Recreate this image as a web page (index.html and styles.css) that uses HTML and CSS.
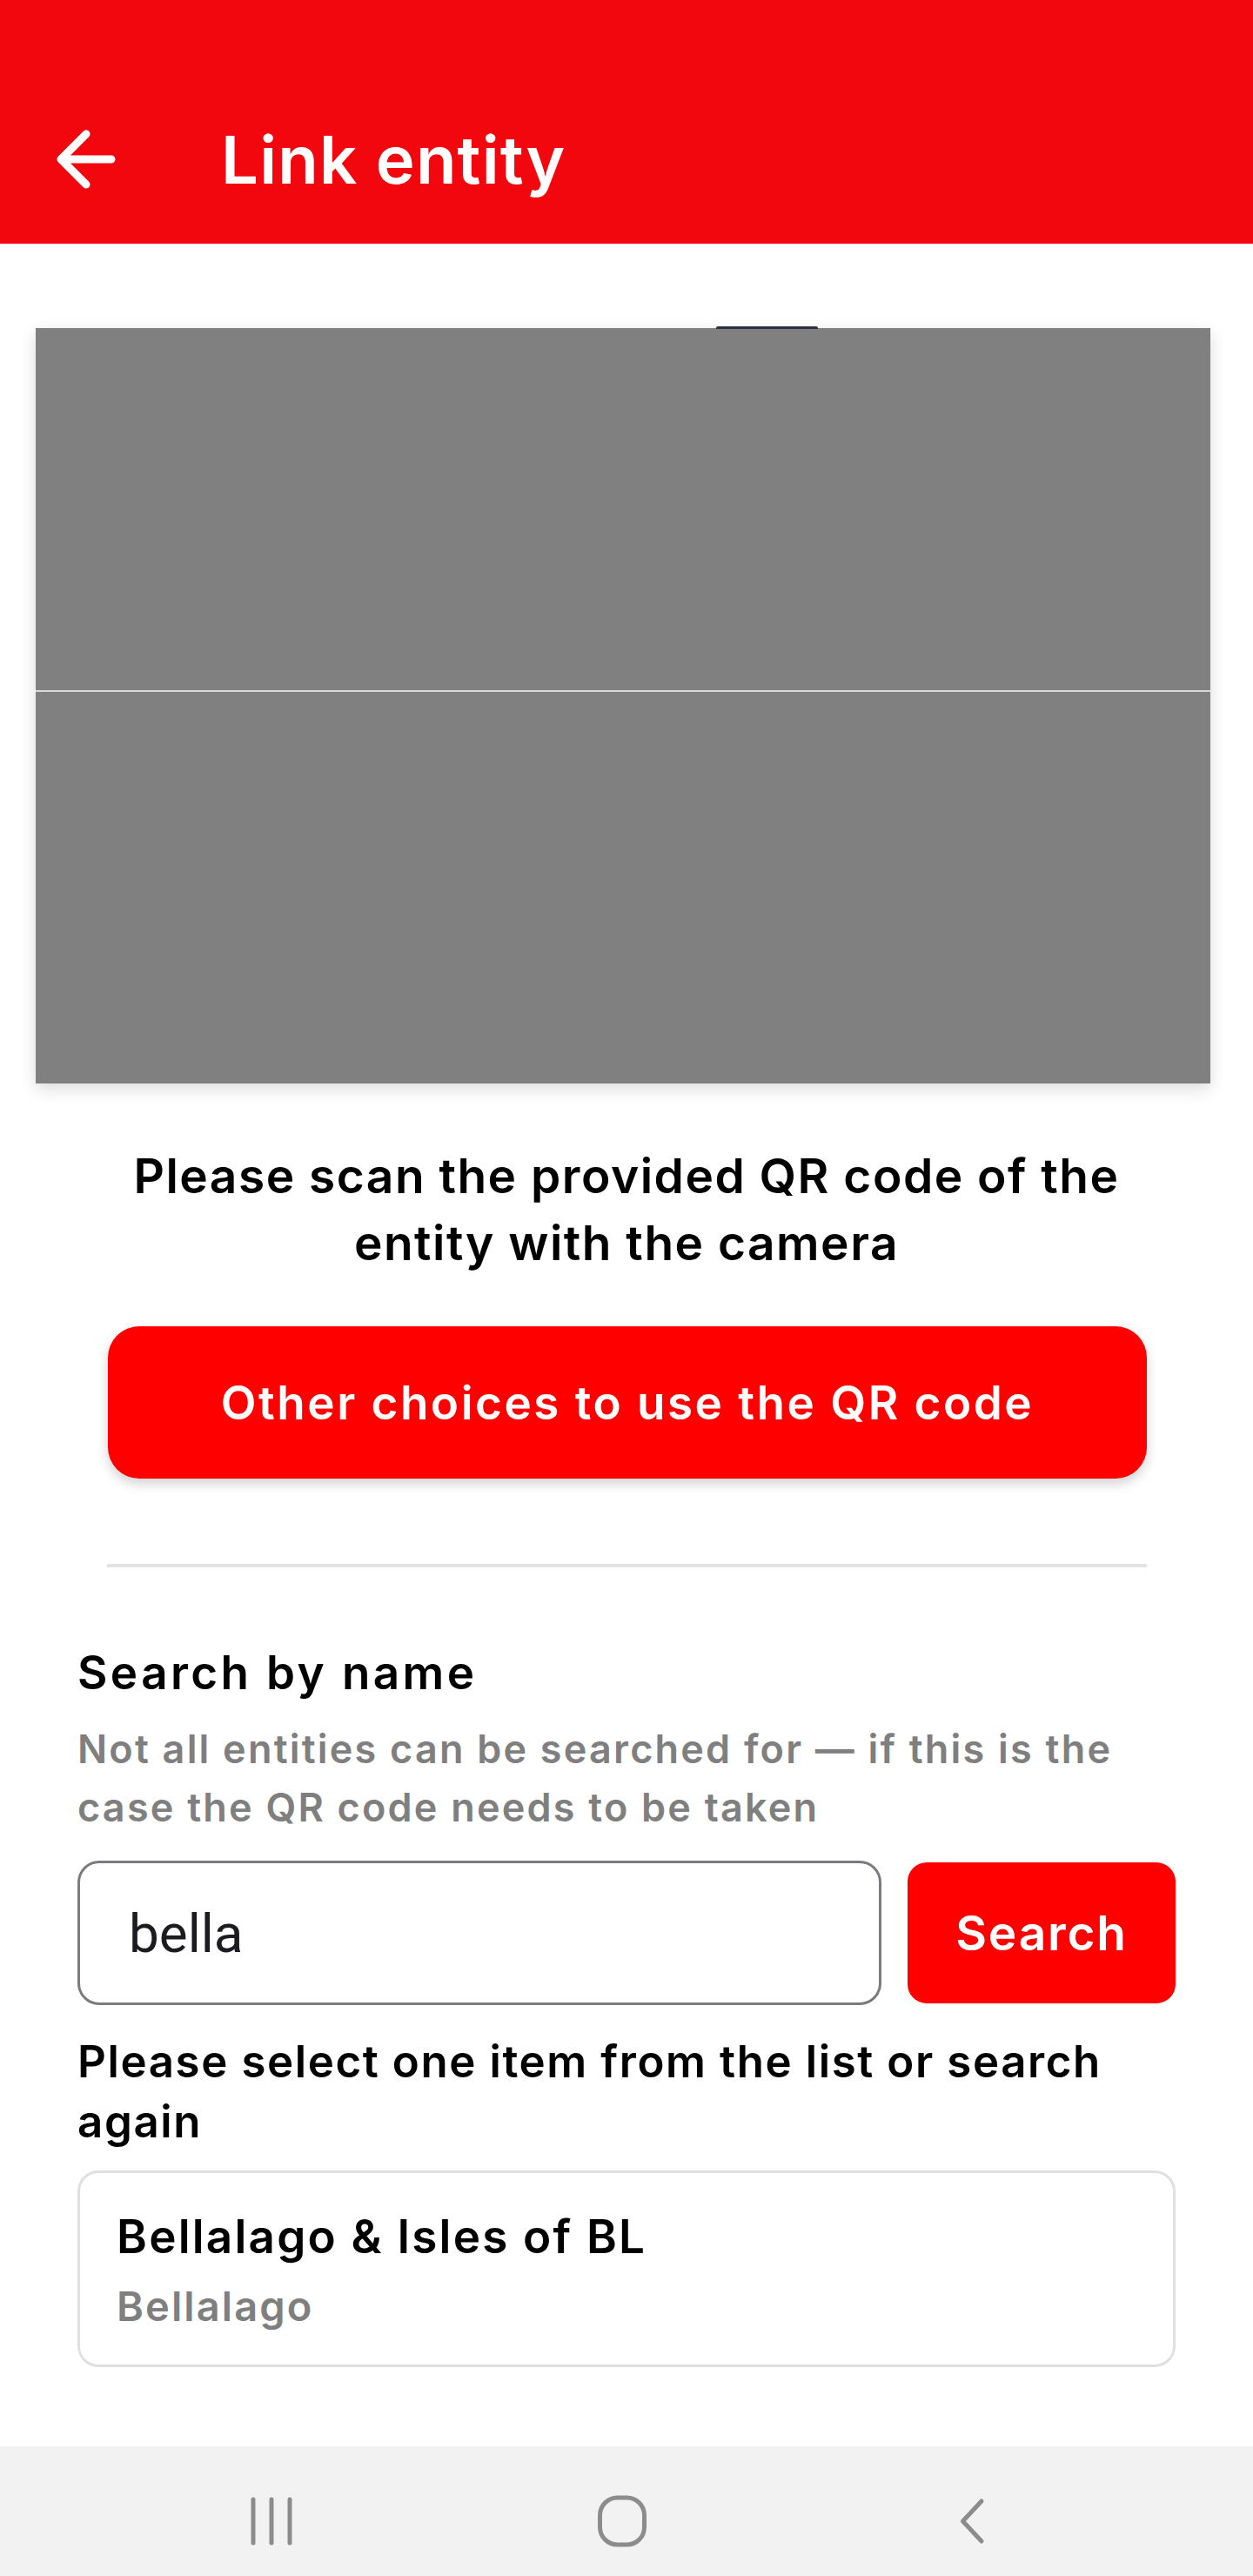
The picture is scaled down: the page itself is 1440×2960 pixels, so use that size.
FILE: index.html
```html
<!doctype html>
<html lang="en">
<head>
    <meta charset="UTF-8">
    <title>Link entity</title>
    <link rel="stylesheet" href="styles.css">
</head>
<body>
    <header class="app-bar">
        <button class="back-btn" aria-label="Back">
            <svg width="80" height="80" viewBox="0 0 80 80">
                <path d="M70 40H12M41 11L12 40L41 69" fill="none" stroke="#fff" stroke-width="9" stroke-linecap="round" stroke-linejoin="round"/>
            </svg>
        </button>
        <h1>Link entity</h1>
    </header>

    <main class="content">
        <div class="scanner">
            <div class="scanner-notch"></div>
            <div class="scan-line"></div>
        </div>

        <p class="scan-hint">Please scan the provided QR code of the entity with the camera</p>

        <button class="btn-wide">Other choices to use the QR code</button>

        <hr class="divider">

        <section class="search">
            <h2>Search by name</h2>
            <p class="hint">Not all entities can be searched for — if this is the case the QR code needs to be taken</p>

            <div class="search-row">
                <input type="text" class="search-input" value="bella">
                <button class="btn-search">Search</button>
            </div>

            <p class="select-label">Please select one item from the list or search again</p>

            <div class="result-card">
                <div class="result-title">Bellalago &amp; Isles of BL</div>
                <div class="result-sub">Bellalago</div>
            </div>
        </section>
    </main>

    <nav class="system-nav">
        <div class="nav-item">
            <svg width="60" height="60" viewBox="0 0 60 60">
                <path d="M9 5V55M30 5V55M51 5V55" stroke="#8c8c8c" stroke-width="5" stroke-linecap="round"/>
            </svg>
        </div>
        <div class="nav-item">
            <svg width="60" height="60" viewBox="0 0 60 60">
                <rect x="4.5" y="3" width="51" height="54" rx="20" fill="none" stroke="#8c8c8c" stroke-width="5"/>
            </svg>
        </div>
        <div class="nav-item">
            <svg width="60" height="60" viewBox="0 0 60 60">
                <path d="M40 7L18.5 30L40 53" fill="none" stroke="#8c8c8c" stroke-width="5" stroke-linecap="round" stroke-linejoin="round"/>
            </svg>
        </div>
    </nav>
</body>
</html>
```

FILE: styles.css
```css
body {
    margin: 0;
    padding: 0;
    height: 2960px;
    display: flex;
    flex-direction: column;
    background: #fff;
    font-family: Inter, "Noto Sans", sans-serif;
    color: #000;
}
.app-bar {
    background-color: #f2070f;
    height: 194px;
    padding: 86px 0 0 58px;
    display: flex;
    align-items: center;
}
.back-btn {
    background: none;
    border: none;
    padding: 0;
    width: 80px;
    height: 80px;
    display: flex;
}
.app-bar h1 {
    margin: 0 0 0 116px;
    color: #fff;
    font-size: 76px;
    font-weight: 600;
    letter-spacing: 1.2px;
}
.content {
    flex: 1;
    display: flex;
    flex-direction: column;
}
.scanner {
    position: relative;
    margin: 97px 49px 0 41px;
    height: 868px;
    background-color: #808080;
    box-shadow: 0 6px 18px rgba(0, 0, 0, 0.14);
}
.scanner-notch {
    position: absolute;
    top: -2px;
    left: 782px;
    width: 117px;
    height: 3px;
    background-color: #2b3140;
    border-radius: 2px 2px 0 0;
}
.scan-line {
    position: absolute;
    top: 416px;
    left: 0;
    right: 0;
    height: 2px;
    background-color: #d9d9d9;
}
.scan-hint {
    margin: 68px 140px 0;
    text-align: center;
    font-size: 55px;
    font-weight: 600;
    letter-spacing: 1.5px;
    line-height: 77px;
}
.btn-wide {
    margin: 57px 122px 0 124px;
    height: 175px;
    border: none;
    border-radius: 36px;
    background-color: #ff0000;
    color: #fff;
    font-family: inherit;
    font-size: 53px;
    font-weight: 600;
    letter-spacing: 2.5px;
    box-shadow: 0 6px 14px rgba(0, 0, 0, 0.18);
}
.divider {
    margin: 98px 122px 0 123px;
    border: none;
    height: 4px;
    background-color: #e3e3e3;
}
.search {
    padding: 0 89px;
}
.search h2 {
    margin: 88px 0 0;
    font-size: 53px;
    font-weight: 600;
    letter-spacing: 3.4px;
    line-height: 67px;
}
.hint {
    margin: 20px 0 0;
    color: #7f7f7f;
    font-size: 45px;
    font-weight: 600;
    letter-spacing: 2.2px;
    line-height: 67px;
}
.search-row {
    margin-top: 28px;
    display: flex;
    align-items: center;
    gap: 30px;
}
.search-input {
    flex: 1;
    box-sizing: border-box;
    height: 166px;
    padding: 0 56px;
    border: 3px solid #7b7a80;
    border-radius: 25px;
    font-family: Roboto, sans-serif;
    font-size: 62px;
    color: #1c1b1f;
    outline: none;
}
.btn-search {
    width: 308px;
    height: 162px;
    border: none;
    border-radius: 22px;
    background-color: #ff0000;
    color: #fff;
    font-family: inherit;
    font-size: 55px;
    font-weight: 600;
    letter-spacing: 1.8px;
}
.select-label {
    margin: 30px 0 0;
    font-size: 51px;
    font-weight: 600;
    letter-spacing: 1.6px;
    line-height: 69px;
}
.result-card {
    margin-top: 22px;
    height: 226px;
    box-sizing: border-box;
    padding: 36px 42px 0;
    border: 3px solid #e0e0e0;
    border-radius: 24px;
}
.result-title {
    font-size: 53px;
    font-weight: 600;
    letter-spacing: 2.2px;
    line-height: 75px;
}
.result-sub {
    margin-top: 9px;
    color: #7f7f7f;
    font-size: 47px;
    font-weight: 600;
    letter-spacing: 2.1px;
    line-height: 66px;
}
.system-nav {
    height: 127px;
    padding: 22px 10px 0 0;
    background-color: #f2f2f2;
    display: flex;
    justify-content: center;
    align-items: center;
    gap: 343px;
}
.nav-item {
    width: 60px;
    height: 60px;
    display: flex;
}
```
